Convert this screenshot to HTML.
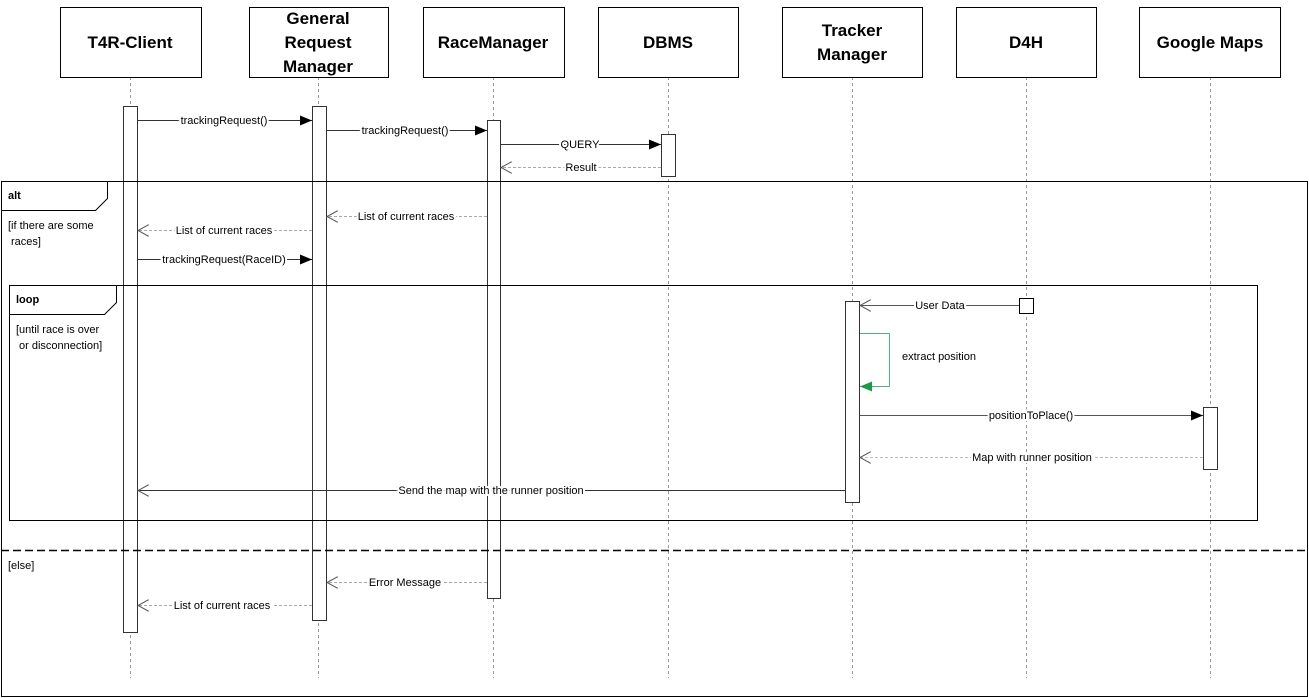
<!DOCTYPE html>
<html><head><meta charset="utf-8"><style>
html,body{margin:0;padding:0;background:#fff;}
svg{display:block;font-family:"Liberation Sans","DejaVu Sans",sans-serif;}
.h{font-weight:bold;font-size:17px;text-anchor:middle;fill:#000;}
.m{font-size:11px;fill:#000;text-anchor:middle;paint-order:stroke;stroke:#fff;stroke-width:4px;}
.g{font-size:11px;fill:#000;}
</style></head><body>
<svg width="1309" height="698" viewBox="0 0 1309 698" xmlns="http://www.w3.org/2000/svg">
<defs>
<marker id="f" markerWidth="12" markerHeight="10" refX="12" refY="5" orient="auto" markerUnits="userSpaceOnUse"><path d="M0,0 L12,5 L0,10 Z" fill="#000"/></marker>
<marker id="o" markerWidth="12" markerHeight="12" refX="11" refY="6" orient="auto" markerUnits="userSpaceOnUse"><path d="M0,0 L11,6 L0,12" fill="none" stroke="#555" stroke-width="1"/></marker>
<marker id="gr" markerWidth="12" markerHeight="10" refX="12" refY="5" orient="auto" markerUnits="userSpaceOnUse"><path d="M0,0 L12,5 L0,10 Z" fill="#1a9a4a"/></marker>
</defs>
<g stroke="#999" stroke-dasharray="3,3" stroke-width="1">
<line x1="130.5" y1="77" x2="130.5" y2="678"/><line x1="318.5" y1="77" x2="318.5" y2="678"/>
<line x1="493.5" y1="77" x2="493.5" y2="678"/><line x1="668.5" y1="77" x2="668.5" y2="678"/>
<line x1="852.5" y1="77" x2="852.5" y2="678"/><line x1="1026.5" y1="77" x2="1026.5" y2="678"/>
<line x1="1210.5" y1="77" x2="1210.5" y2="678"/>
</g>
<g fill="#fff" stroke="#000">
<rect x="60.5" y="7.5" width="141" height="70"/><rect x="249.5" y="7.5" width="139" height="70"/>
<rect x="423.5" y="7.5" width="141" height="70"/><rect x="598.5" y="7.5" width="140" height="70"/>
<rect x="782.5" y="7.5" width="140" height="70"/><rect x="956.5" y="7.5" width="140" height="70"/>
<rect x="1139.5" y="7.5" width="141" height="70"/>
</g>
<text class="h" x="130" y="48">T4R-Client</text>
<text class="h" x="318" y="24">General</text><text class="h" x="318" y="48">Request</text><text class="h" x="318" y="72">Manager</text>
<text class="h" x="493" y="48">RaceManager</text>
<text class="h" x="668" y="48">DBMS</text>
<text class="h" x="852" y="36">Tracker</text><text class="h" x="852" y="60">Manager</text>
<text class="h" x="1026" y="48">D4H</text>
<text class="h" x="1210" y="48">Google Maps</text>
<g fill="#fff" stroke="#333">
<rect x="123.5" y="106.5" width="14" height="526"/><rect x="312.5" y="106.5" width="14" height="514"/>
<rect x="487.5" y="120.5" width="13" height="478"/><rect x="661.5" y="134.5" width="14" height="42"/>
<rect x="845.5" y="301.5" width="14" height="201"/><rect x="1203.5" y="407.5" width="14" height="62"/>
<rect x="1019.5" y="298.5" width="14" height="15" stroke="#000"/>
</g>
<g fill="none" stroke="#000">
<rect x="1.5" y="181.5" width="1306" height="515"/>
<path d="M1.5,210.5 H95.5 L107.5,198.5 V181.5"/>
<rect x="9.5" y="285.5" width="1248" height="235"/>
<path d="M9.5,314.5 H104.5 L116.5,302.5 V285.5"/>
<line x1="1" y1="550.5" x2="1308" y2="550.5" stroke-dasharray="8,4" stroke-width="1.5"/>
</g>
<text class="g" x="8" y="199" font-weight="bold">alt</text>
<text class="g" x="8" y="229" font-size="10">[if there are some</text>
<text class="g" x="11" y="245" font-size="10">races]</text>
<text class="g" x="16" y="303" font-weight="bold">loop</text>
<text class="g" x="16" y="333" font-size="10">[until race is over</text>
<text class="g" x="19" y="349" font-size="10">or disconnection]</text>
<text class="g" x="8" y="569" font-size="10">[else]</text>
<g stroke="#333" stroke-width="1" fill="none">
<line x1="138" y1="120.5" x2="312" y2="120.5" marker-end="url(#f)"/>
<line x1="327" y1="130.5" x2="487" y2="130.5" marker-end="url(#f)"/>
<line x1="501" y1="144.5" x2="661" y2="144.5" marker-end="url(#f)"/>
<line x1="661" y1="167.5" x2="501" y2="167.5" stroke="#aaa" stroke-dasharray="3,2" marker-end="url(#o)"/>
<line x1="487" y1="216.5" x2="327" y2="216.5" stroke="#aaa" stroke-dasharray="3,2" marker-end="url(#o)"/>
<line x1="312" y1="230.5" x2="138" y2="230.5" stroke="#aaa" stroke-dasharray="3,2" marker-end="url(#o)"/>
<line x1="138" y1="259.5" x2="312" y2="259.5" marker-end="url(#f)"/>
<line x1="1019" y1="305.5" x2="860" y2="305.5" stroke="#555" marker-end="url(#o)"/>
<path d="M860,333.5 H889.5 V386.5 H860" stroke="#4cb87a" marker-end="url(#gr)"/>
<line x1="860" y1="415.5" x2="1203" y2="415.5" stroke="#555" marker-end="url(#f)"/>
<line x1="1203" y1="457.5" x2="860" y2="457.5" stroke="#bbb" stroke-dasharray="3,2" marker-end="url(#o)"/>
<line x1="845" y1="490.5" x2="138" y2="490.5" stroke="#333" marker-end="url(#o)"/>
<line x1="487" y1="582.5" x2="327" y2="582.5" stroke="#aaa" stroke-dasharray="3,2" marker-end="url(#o)"/>
<line x1="312" y1="605.5" x2="138" y2="605.5" stroke="#aaa" stroke-dasharray="3,2" marker-end="url(#o)"/>
</g>
<text class="m" x="224" y="124">trackingRequest()</text>
<text class="m" x="405" y="134">trackingRequest()</text>
<text class="m" x="580" y="148">QUERY</text>
<text class="m" x="581" y="171">Result</text>
<text class="m" x="406" y="220">List of current races</text>
<text class="m" x="224" y="234">List of current races</text>
<text class="m" x="224" y="263">trackingRequest(RaceID)</text>
<text class="m" x="940" y="309">User Data</text>
<text class="g" x="902" y="360">extract position</text>
<text class="m" x="1031" y="419">positionToPlace()</text>
<text class="m" x="1032" y="461">Map with runner position</text>
<text class="m" x="491" y="494">Send the map with the runner position</text>
<text class="m" x="405" y="586">Error Message</text>
<text class="m" x="222" y="609">List of current races</text>
</svg>
</body></html>
